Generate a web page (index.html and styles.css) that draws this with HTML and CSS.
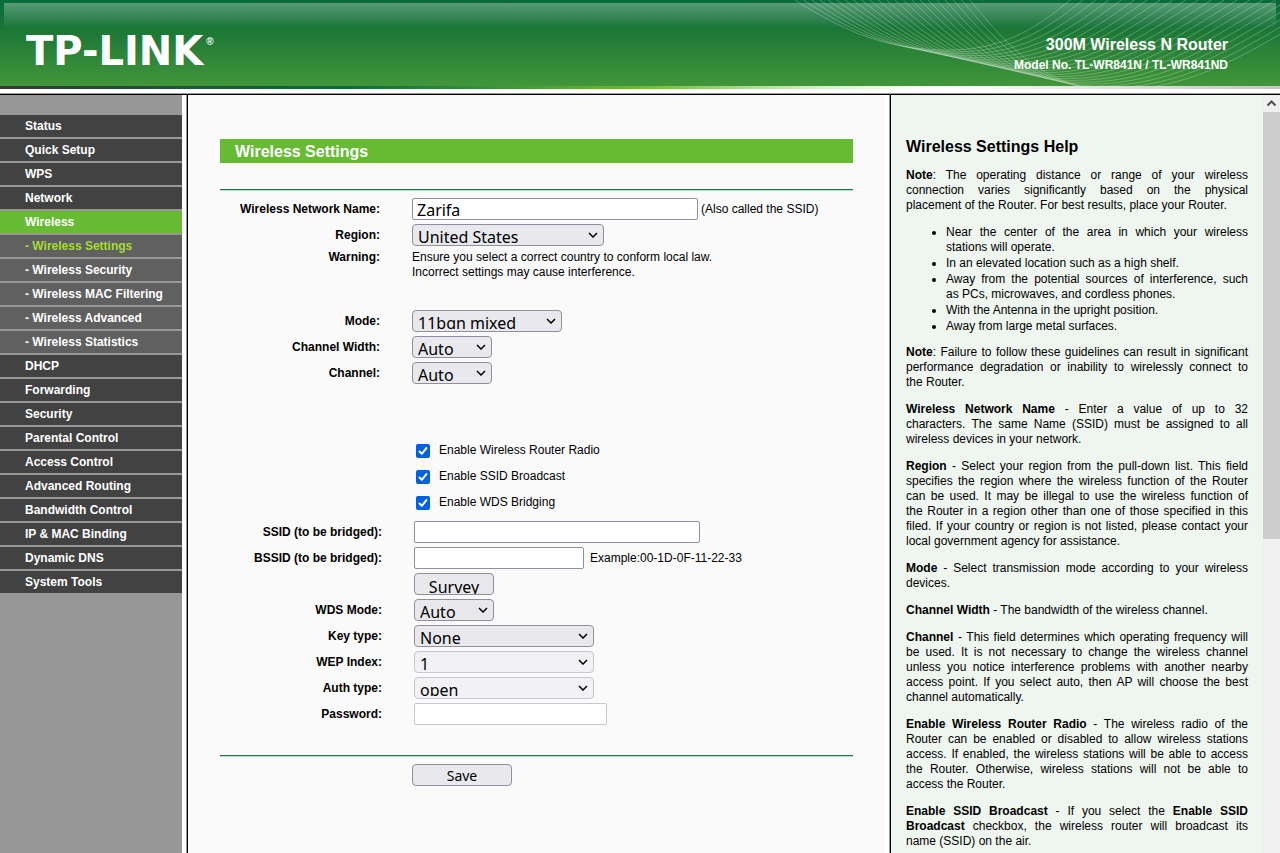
FILE: index.html
```html
<!DOCTYPE html>
<html lang="en">

	<head>
		<meta charset="UTF-8">
		<title>TL-WR841N</title>
		<link rel="stylesheet" href="styles.css">
	</head>

	<body>
		<header class="banner">
			<svg class="waves" viewBox="0 0 500 86" aria-hidden="true"></svg>
			<div class="logo">TP-LINK<sup>®</sup></div>
			<div class="model">
				<div class="model_name">300M Wireless N Router</div>
				<div class="model_no">Model No. TL-WR841N / TL-WR841ND</div>
			</div>
		</header>
		<div class="strip"></div>

		<div class="frames">
			<nav class="menu">
				<a href="#">Status</a>
				<a href="#">Quick Setup</a>
				<a href="#">WPS</a>
				<a href="#">Network</a>
				<a href="#" class="open">Wireless</a>
				<a href="#" class="sub current">- Wireless Settings</a>
				<a href="#" class="sub">- Wireless Security</a>
				<a href="#" class="sub">- Wireless MAC Filtering</a>
				<a href="#" class="sub">- Wireless Advanced</a>
				<a href="#" class="sub">- Wireless Statistics</a>
				<a href="#">DHCP</a>
				<a href="#">Forwarding</a>
				<a href="#">Security</a>
				<a href="#">Parental Control</a>
				<a href="#">Access Control</a>
				<a href="#">Advanced Routing</a>
				<a href="#">Bandwidth Control</a>
				<a href="#">IP &amp; MAC Binding</a>
				<a href="#">Dynamic DNS</a>
				<a href="#">System Tools</a>
			</nav>
			<div class="divider"></div>

			<main class="main">
				<h1 class="title">Wireless Settings</h1>
				<form class="settings">
					<div class="group">
						<div class="row">
							<label class="name" for="ssid">Wireless Network Name:</label>
							<input class="field w286" id="ssid" type="text" value="Zarifa">
							<span class="note">(Also called the SSID)</span>
						</div>
						<div class="row">
							<label class="name" for="region">Region:</label>
							<select class="field w192" id="region"><option>United States</option></select>
						</div>
						<div class="row warning">
							<span class="name">Warning:</span>
							<p>Ensure you select a correct country to conform local law.<br>Incorrect settings may cause interference.</p>
						</div>
					</div>

					<div class="group radio">
						<div class="row">
							<label class="name" for="mode">Mode:</label>
							<select class="field w150" id="mode"><option>11bgn mixed</option></select>
						</div>
						<div class="row">
							<label class="name" for="width">Channel Width:</label>
							<select class="field w80" id="width"><option>Auto</option></select>
						</div>
						<div class="row">
							<label class="name" for="channel">Channel:</label>
							<select class="field w80" id="channel"><option>Auto</option></select>
						</div>
					</div>

					<div class="group checks">
						<label class="check"><input type="checkbox" checked>Enable Wireless Router Radio</label>
						<label class="check"><input type="checkbox" checked>Enable SSID Broadcast</label>
						<label class="check"><input type="checkbox" checked>Enable WDS Bridging</label>
					</div>

					<div class="group bridge">
						<div class="row">
							<label class="name" for="bssid_name">SSID (to be bridged):</label>
							<input class="field w286" id="bssid_name" type="text">
						</div>
						<div class="row">
							<label class="name" for="bssid">BSSID (to be bridged):</label>
							<input class="field w170" id="bssid" type="text">
							<span class="note far">Example:00-1D-0F-11-22-33</span>
						</div>
						<div class="row">
							<span class="name"></span>
							<button class="field w80 survey" type="button">Survey</button>
						</div>
						<div class="row">
							<label class="name" for="wds">WDS Mode:</label>
							<select class="field w80" id="wds"><option>Auto</option></select>
						</div>
						<div class="row">
							<label class="name" for="key">Key type:</label>
							<select class="field w180" id="key"><option>None</option></select>
						</div>
						<div class="row">
							<label class="name" for="wep">WEP Index:</label>
							<select class="field w180" id="wep" disabled><option>1</option></select>
						</div>
						<div class="row">
							<label class="name" for="auth">Auth type:</label>
							<select class="field w180" id="auth" disabled><option>open</option></select>
						</div>
						<div class="row">
							<label class="name" for="pwd">Password:</label>
							<input class="field w193" id="pwd" type="password" disabled>
						</div>
					</div>

					<div class="buttons">
						<button class="field save" type="button">Save</button>
					</div>
				</form>
			</main>
			<div class="divider"></div>

			<aside class="help">
				<div class="help_text">
					<h2>Wireless Settings Help</h2>
					<p><b>Note</b>: The operating distance or range of your wireless connection varies significantly based on the physical placement&nbsp;of the Router. For best results, place your Router.</p>
					<ul>
						<li>Near the center of the area in which your wireless stations will operate.</li>
						<li>In an elevated location such as a high shelf.</li>
						<li>Away from the potential sources of interference, such as&nbsp;PCs, microwaves, and cordless phones.</li>
						<li>With the Antenna in the upright position.</li>
						<li>Away from large metal surfaces.</li>
					</ul>
					<p><b>Note</b>: Failure to follow these guidelines can result in significant performance degradation or inability to wirelessly connect to the&nbsp;Router.</p>
					<p><b>Wireless Network Name</b> - Enter a value of up to 32 characters.&nbsp;The same Name (SSID) must be assigned to all wireless devices in your network.</p>
					<p><b>Region</b> - Select your region from the pull-down list. This field specifies the region where the wireless function of the Router can be used. It may be illegal to use the wireless function of the&nbsp;Router in a region other than one of those specified in this filed.&nbsp;If your country or region is not listed, please contact your local government agency for assistance.</p>
					<p><b>Mode</b> - Select transmission mode according to your wireless devices.</p>
					<p><b>Channel Width</b> - The bandwidth of the wireless channel.</p>
					<p><b>Channel</b> - This field determines which operating frequency will be used. It is not necessary to change the wireless channel unless you notice interference problems with another nearby access point. If you select auto, then AP will choose the best channel automatically.</p>
					<p><b>Enable Wireless Router Radio</b> - The wireless radio of the Router can be enabled or disabled to allow wireless stations access. If enabled, the wireless stations will be able to access the Router. Otherwise, wireless stations will not be able to access the Router.</p>
					<p><b>Enable SSID Broadcast</b> - If you select the <b>Enable SSID Broadcast</b> checkbox, the wireless router will broadcast its name (SSID) on the air.</p>
				</div>
				<div class="scrollbar" aria-hidden="true">
					<svg class="scroll_up" viewBox="0 0 17 17"><path d="M4.5 10.5L8.5 6.5L12.5 10.5" fill="none" stroke="#505050" stroke-width="2"/></svg>
					<div class="thumb"></div>
				</div>
			</aside>
		</div>
		<script src="script.js"></script>
	</body>

</html>
```
FILE: styles.css
```css
* {
	box-sizing: border-box;
}

body {
	margin: 0;
	height: 100vh;
	display: flex;
	flex-direction: column;
	overflow: hidden;
	background-color: #fff;
	font: 12px/15px "Liberation Sans", Arial, sans-serif;
	color: #000;
}

/* banner */
.banner {
	position: relative;
	flex: none;
	height: 86px;
	display: flex;
	justify-content: space-between;
	padding: 0 52px 0 26px;
	background: linear-gradient(#086b39 0, #1c7737 30px, #41963a 100%);
	color: #fff;
}

/* glossy highlight */
.banner::before {
	content: "";
	position: absolute;
	left: 4px;
	right: 4px;
	top: 3px;
	height: 25px;
	background: linear-gradient(rgba(255, 255, 255, .32), rgba(255, 255, 255, 0));
}

.waves {
	position: absolute;
	right: 0;
	top: 0;
	width: 500px;
	height: 86px;
}

.waves path {
	fill: none;
	stroke: #fff;
	stroke-opacity: .25;
}

.logo {
	position: relative;
	padding-top: 32px;
	font: bold 40px/38px "DejaVu Sans", Verdana, sans-serif;
}

.logo sup {
	margin-left: 3px;
	font: bold 10px/10px "Liberation Sans", Arial, sans-serif;
	vertical-align: 20px;
}

.model {
	position: relative;
	padding-top: 34px;
	text-align: right;
	font-weight: bold;
}

.model_name {
	font-size: 16px;
	line-height: 21px;
}

.model_no {
	line-height: 20px;
}

.strip {
	flex: none;
	height: 3px;
	background: linear-gradient(90deg, #383838 0, #0a6c3a 27%, #6cbb35 50%, #d5f0c5 64%, #fff 73%, #c4c4c4 100%);
}

/* frames */
.frames {
	flex: 1;
	min-height: 0;
	display: flex;
	margin-top: 4px;
	border-top: 1px solid #999;
	box-shadow: inset 0 1px #000;
	padding-top: 1px;
}

.divider {
	flex: none;
	width: 6px;
	background-color: #fff;
	border-right: 1px solid #000;
	box-shadow: inset -1px 0 #999;
}

.menu {
	flex: none;
	width: 182px;
	padding-top: 20px;
	background-color: #979797;
}

.menu a {
	display: block;
	height: 22px;
	margin-bottom: 2px;
	padding-left: 25px;
	background-color: #424242;
	color: #fff;
	font-weight: bold;
	line-height: 22px;
	text-decoration: none;
}

.menu a.open {
	background-color: #66bb33;
}

.menu a.sub {
	background-color: #606060;
}

.menu a.current {
	color: #a4dc32;
}

/* settings */
.main {
	flex: 1;
	padding: 44px 32px 0;
	background-color: #fafafa;
}

.title {
	margin: 0 0 26px;
	padding: 2px 0 0 15px;
	background-color: #66bb33;
	color: #fff;
	font-size: 16px;
	line-height: 22px;
}

.settings {
	border-top: 1px solid #1c7240;
	box-shadow: inset 0 1px #b9dcc5;
	padding-top: 6px;
}

.row {
	display: flex;
	align-items: center;
	height: 26px;
}

.name {
	width: 160px;
	margin-right: 32px;
	text-align: right;
	font-weight: bold;
}

.warning {
	height: 34px;
}

.warning .name {
	align-self: flex-start;
	padding-top: 2px;
}

.warning p {
	margin: 0;
}

.radio {
	padding-top: 26px;
}

.checks {
	padding: 51px 0 4px 196px;
}

.check {
	display: flex;
	align-items: center;
	height: 26px;
}

.check input {
	appearance: none;
	width: 14px;
	height: 14px;
	margin: 2px 9px 0 0;
	border-radius: 2px;
	background: #0061e0 url("data:image/svg+xml,%3Csvg xmlns='http://www.w3.org/2000/svg' viewBox='0 0 14 14'%3E%3Cpath d='M3.5 7.5L5.8 9.8L10.5 4' fill='none' stroke='%23fff' stroke-width='2' stroke-linecap='round' stroke-linejoin='round'/%3E%3C/svg%3E");
}

.bridge {
	padding-left: 2px;
}

.note {
	margin-left: 3px;
}

.note.far {
	margin-left: 6px;
}

.field {
	height: 22px;
	margin: 0;
	padding: 2px 4px 0;
	border: 1px solid #8f8f9d;
	border-radius: 2px;
	background-color: #fff;
	color: #000;
	font: 16px/19px "Noto Sans", "Open Sans", sans-serif;
}

select.field {
	appearance: none;
	padding: 3px 20px 2px 5px;
	border-radius: 4px;
	background: #e9e9ed url("data:image/svg+xml,%3Csvg xmlns='http://www.w3.org/2000/svg' width='10' height='6'%3E%3Cpath d='M1 1L5 5L9 1' fill='none' stroke='%23000' stroke-width='1.5'/%3E%3C/svg%3E") no-repeat right 5px center;
}

button.field {
	border-radius: 4px;
	background-color: #e9e9ed;
	overflow: hidden;
}

.field:disabled {
	opacity: 1;
	border-color: #c7c7ce;
}

select.field:disabled {
	background-color: #f2f2f4;
}

button.survey {
	padding: 4px 0 0;
}

.w80 {
	width: 80px;
}

.w150 {
	width: 150px;
}

.w170 {
	width: 170px;
}

.w180 {
	width: 180px;
}

.w192 {
	width: 192px;
}

.w193 {
	width: 193px;
}

.w286 {
	width: 286px;
}

.buttons {
	margin-top: 28px;
	padding: 8px 0 0 192px;
	border-top: 1px solid #1c7240;
	box-shadow: inset 0 1px #b9dcc5;
}

button.save {
	width: 100px;
	padding-top: 0;
	font-size: 14px;
}

/* help */
.help {
	flex: none;
	width: 389px;
	display: flex;
	background-color: #eff6f0;
}

.help_text {
	flex: 1;
	padding: 42px 15px 0;
	overflow: hidden;
	text-align: justify;
}

.help_text h2 {
	margin: 0;
	font-size: 16px;
	line-height: 19px;
}

.help_text p {
	margin: 12px 0;
}

.help_text ul {
	margin: 11px 0;
	padding-left: 40px;
}

/* the next paragraph keeps its gap from the list */
.help_text ul + p {
	margin-top: 11px;
}

.help_text li + li {
	margin-top: 1px;
}

.scrollbar {
	width: 17px;
	background-color: #f0f0f0;
}

.scroll_up {
	display: block;
	width: 17px;
	height: 17px;
}

.thumb {
	height: 58%;
	max-height: 427px;
	background-color: #cdcdcd;
}
```
FILE: script.js
```javascript
// ribbon of thin lines: down from the left, through a valley, up to the right
var waves = document.querySelector(".waves");
var count = 22;

for(var i = 0; i < count; i++) {
	var t = i / (count - 1);
	var bottom = 50 + 40 * t;
	var points = [
		"M", 15 + 175 * t, 0,
		"C", 70 + 160 * t, 35 + 15 * t, 110 + 160 * t, bottom, 170 + 160 * t, bottom,
		"C", 220 + 200 * t, bottom, 255 + 215 * t, 30 + 20 * t, 290 + 270 * t, 0
	];
	var path = document.createElementNS("http://www.w3.org/2000/svg", "path");
	path.setAttribute("d", points.join(" "));
	waves.appendChild(path);
}
```
